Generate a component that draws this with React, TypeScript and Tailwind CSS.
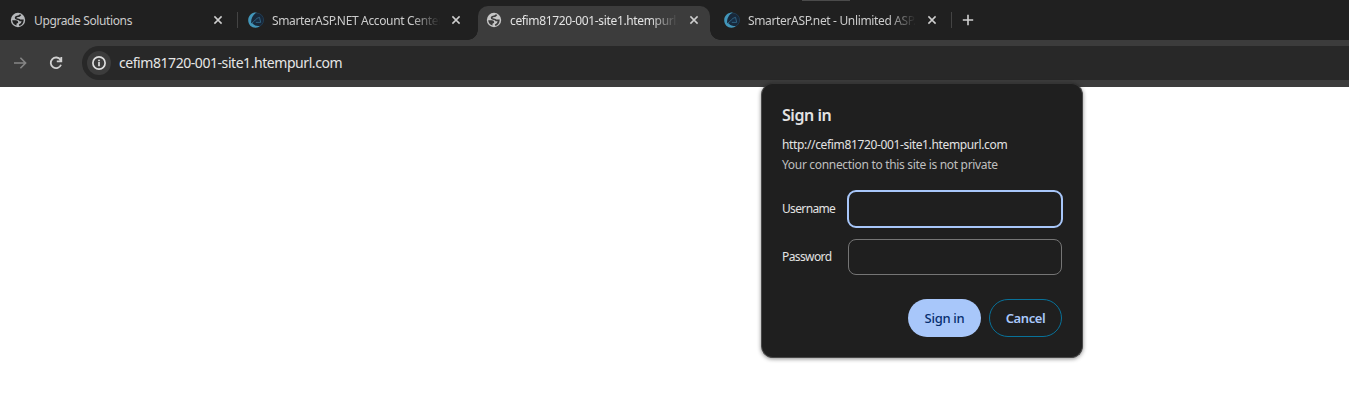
import type { ReactNode } from "react";

function Globe({ color, land }: { color: string; land: string }) {
  return (
    <svg viewBox="0 0 16 16" className="size-4 shrink-0">
      <circle cx="8" cy="8" r="7.2" fill={color} />
      <path
        d="M10.600 2.600C9.800 4.300 8.500 4.500 7 4.500 5.800 4.700 5.300 5.600 5.900 6.500 6.800 7.500 9.300 7 10 8.300H12.800C12.600 10.400 11.300 12.500 9.100 13.300"
        fill="none"
        stroke={land}
        strokeWidth="1.7"
      />
      <path d="M2.200 8.300h3.700c1.300 0 2.200.8 2.300 2.100-.3 1-1.300.8-1.700 1.300v1.800C4.100 13 2.300 10.900 2.200 8.300z" fill={land} />
    </svg>
  );
}

function SmarterLogo() {
  return (
    <svg viewBox="0 0 16 16" className="size-4 shrink-0">
      <circle cx="8.700" cy="8" r="6.900" fill="#18283a" stroke="#24455e" strokeWidth=".7" />
      <path d="M9 .3C3.900.4.200 3.700.200 8.300c0 4.500 3.300 7.500 7.300 7.500 2 0 3.300-.7 4.200-1.700-2.800 0-5.800-.6-6.800-2.600L3.200 11C2.800 6.900 4.700 2.500 9 .3z" fill="#4296ba" />
      <path d="M3.900 10.900C6.500 9.800 7.700 6 11.500 5.300l1.200 5.100H7.800" fill="#172c43" stroke="#357091" strokeWidth=".8" />
    </svg>
  );
}

function Close() {
  return (
    <svg viewBox="0 0 10 10" className="size-[10px] shrink-0" stroke="#cecece" strokeWidth="1.5" fill="none">
      <path d="M1.400 1.400l7.200 7.200M8.600 1.400L1.400 8.600" />
    </svg>
  );
}

type TabProps = { icon: ReactNode; title: string; tracking: string; active?: boolean; fade?: boolean; divider?: boolean };

function Tab({ icon, title, tracking, active, fade, divider }: TabProps) {
  return (
    <div className="relative flex h-10 w-[238px] shrink-0 items-center pl-[10px]">
      {active && (
        <div className="absolute top-[6px] right-1 bottom-0 left-[2px] rounded-t-[10px] bg-[#3c3c3c]">
          <span className="absolute bottom-0 -left-[10px] size-[10px] bg-[radial-gradient(circle_at_0_0,transparent_9.5px,#3c3c3c_10px)]" />
          <span className="absolute -right-[10px] bottom-0 size-[10px] bg-[radial-gradient(circle_at_100%_0,transparent_9.5px,#3c3c3c_10px)]" />
        </div>
      )}
      <div className="relative flex items-center">
        {icon}
        <span
          className={`relative top-px ml-2 w-[168px] overflow-hidden text-[12px] leading-5 whitespace-nowrap ${tracking} ${active ? "text-[#e3e3e3]" : "text-[#cccccc]"} ${fade ? "[mask-image:linear-gradient(to_right,black_140px,transparent_168px)]" : ""}`}
        >
          {title}
        </span>
        <span className="ml-[11px] flex">
          <Close />
        </span>
      </div>
      {divider && <span className="absolute top-3 right-0 h-4 w-px bg-[#444444]" />}
    </div>
  );
}

export default function App() {
  return (
    <div className="relative h-[417px] w-full overflow-hidden bg-white font-['Segoe_UI','Noto_Sans',sans-serif]">
      <header className="relative flex h-10 bg-[#202020]">
        <Tab icon={<Globe color="#b5b7ba" land="#202020" />} title="Upgrade Solutions" tracking="tracking-[-0.38px]" divider />
        <Tab icon={<SmarterLogo />} title="SmarterASP.NET Account Center" tracking="tracking-[-0.35px]" fade />
        <Tab icon={<Globe color="#c6c6c6" land="#3c3c3c" />} title="cefim81720-001-site1.htempurl.com" tracking="tracking-[-0.35px]" active fade />
        <Tab icon={<SmarterLogo />} title="SmarterASP.net - Unlimited ASP.NET" tracking="tracking-[-0.35px]" fade divider />
        <svg viewBox="0 0 12 12" className="mt-[14px] ml-[10px] size-3" stroke="#d0d0d0" strokeWidth="1.6">
          <path d="M6 .8v10.400M.8 6h10.400" />
        </svg>
        <span className="absolute top-0 left-[802px] h-px w-12 bg-[#4b4b4b]" />
      </header>
      <div className="flex h-[47px] items-start bg-[#3c3c3c] pt-[6px]">
        <svg viewBox="0 0 16 16" className="mt-[9px] ml-3 size-4" fill="none" stroke="#858585" strokeWidth="1.600">
          <path d="M2 8h11M8.400 2.800L13.600 8l-5.200 5.200" />
        </svg>
        <svg viewBox="0 0 16 16" className="mt-[9px] ml-5 size-4" fill="none" stroke="#d0d0d0" strokeWidth="1.800">
          <path d="M12.500 4.900A5.300 5.300 0 1 0 13 9.700M13.300 1.900v4.500H8.800" />
        </svg>
        <div className="ml-[18px] flex h-[34px] flex-1 items-center rounded-l-full bg-[#282828] pl-[5px]">
          <span className="flex size-6 items-center justify-center rounded-full bg-[#3c3c3c]">
            <svg viewBox="0 0 16 16" className="size-4" fill="none" stroke="#dedede" strokeWidth="1.700">
              <circle cx="8" cy="8" r="6.100" />
              <path d="M8 7v4.200M8 4.700v1.600" />
            </svg>
          </span>
          <span className="ml-2 text-[14px] leading-5 tracking-[-0.44px] text-[#e6e6e6]">cefim81720-001-site1.htempurl.com</span>
        </div>
      </div>
      <section className="absolute top-[83px] left-[761px] h-[275px] w-[322px] rounded-[12px] border border-[#484848] border-t-[#343434] bg-[#1f1f1f] px-5 pt-5 shadow-[0_1px_4px_rgba(0,0,0,0.45)]">
        <h1 className="text-[16px] leading-[22px] font-semibold tracking-[-0.45px] text-[#e3e3e3]">Sign in</h1>
        <p className="mt-[9px] text-[12px] leading-5 tracking-[-0.35px] text-[#e3e3e3]">http://cefim81720-001-site1.htempurl.com</p>
        <p className="text-[12px] leading-5 tracking-[-0.32px] text-[#bfbfbf]">Your connection to this site is not private</p>
        <div className="mt-[15px] -mr-px flex items-center">
          <label htmlFor="username" className="w-[65px] text-[12px] tracking-[-0.65px] text-[#e3e3e3]">Username</label>
          <input id="username" className="h-[38px] w-[216px] shrink-0 rounded-[9px] border-2 border-[#a8c7fa] bg-transparent px-2 text-[12px] text-white outline-none" />
        </div>
        <div className="mt-[11px] flex items-center">
          <label htmlFor="password" className="w-[66px] text-[12px] tracking-[-0.6px] text-[#e3e3e3]">Password</label>
          <input id="password" type="password" className="h-9 w-[214px] shrink-0 rounded-[8px] border border-[#757575] bg-transparent px-2 text-[12px] text-white outline-none" />
        </div>
        <div className="mt-6 flex justify-end gap-2">
          <button className="h-[38px] w-[73px] rounded-full bg-[#a8c7fa] pt-[2px] text-[13px] font-medium tracking-[-0.3px] text-[#062e6f]">Sign in</button>
          <button className="h-[38px] w-[73px] rounded-full border border-[#087199] pt-[2px] text-[13px] font-semibold tracking-[-0.4px] text-[#a8c7fa]">Cancel</button>
        </div>
      </section>
    </div>
  );
}
